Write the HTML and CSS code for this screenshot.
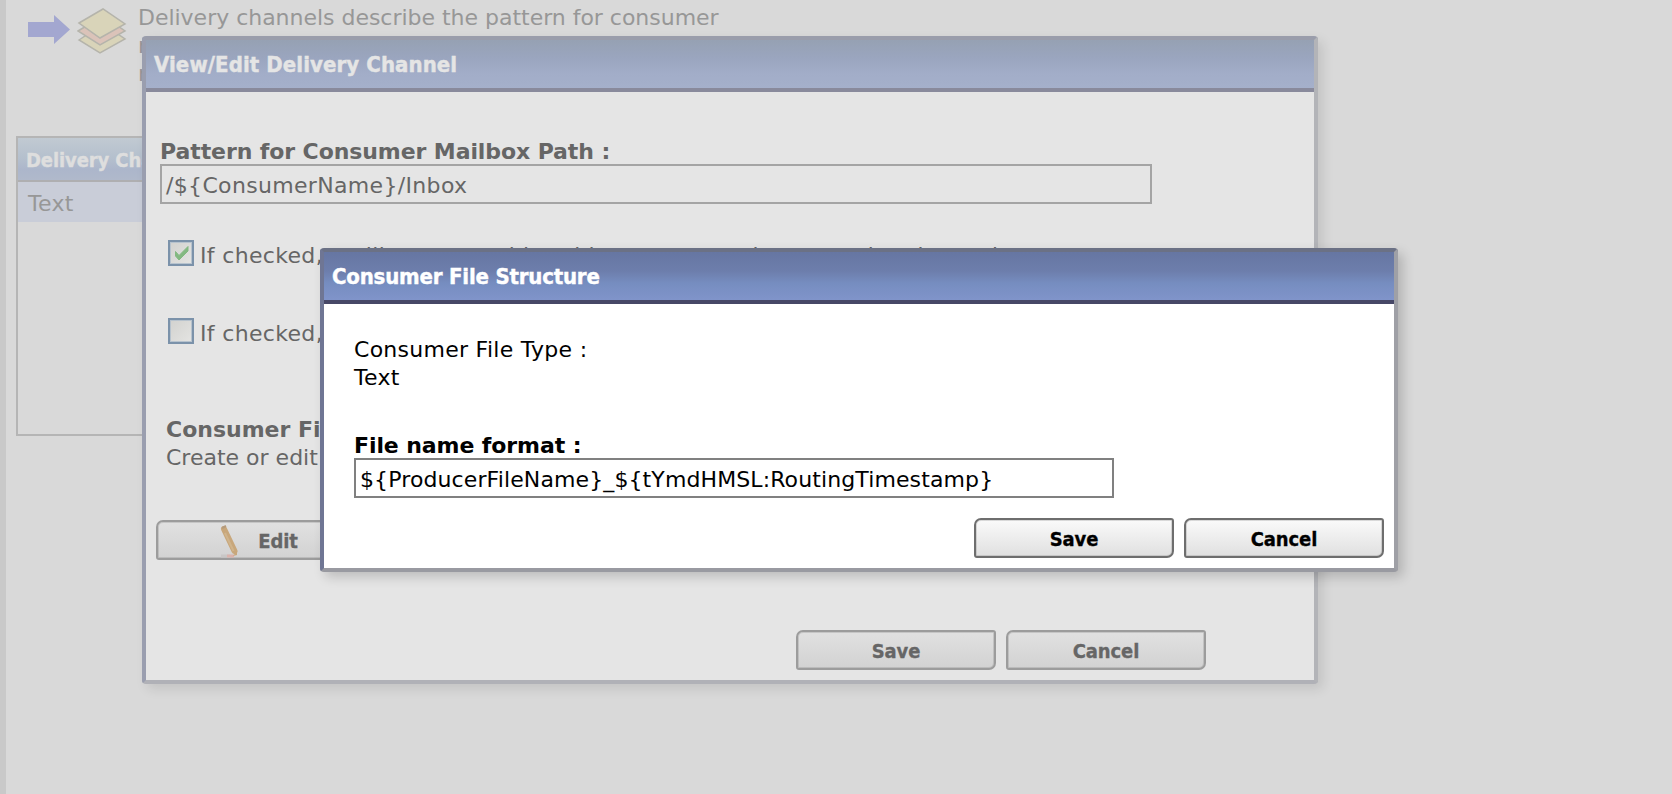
FILE: index.html
```html
<!DOCTYPE html>
<html lang="en">
<head>
<meta charset="utf-8">
<title>Consumer File Structure</title>
<link rel="stylesheet" href="styles.css">
</head>
<body>
<main class="page">
  <header class="intro">
    <svg class="arrow" width="44" height="32" viewBox="0 0 44 32"><path d="M1 8H27V1L43 15.500L27 30V23H1Z" fill="#a3a7d0"/></svg>
    <svg class="stack" width="50" height="48" viewBox="0 0 50 48" stroke="#b5b4ab" stroke-width="1.500"><path d="M2 33L26 17L48 32L23 46Z" fill="#d9d4b9"/><path d="M1 24L26 9L48 24L23 38Z" fill="#dbc3b9"/><path d="M2 16L26 2L48 17L23 31Z" fill="#d9d4b9"/></svg>
    <p class="intro-text">Delivery channels describe the pattern for consumer<br>mailboxes<br>mailbox</p>
  </header>
  <section class="list">
    <h2 class="list-head">Delivery Channels</h2>
    <div class="list-row">Text</div>
  </section>
</main>

<section class="dialog channel">
  <h1 class="title">View/Edit Delivery Channel</h1>
  <div class="channel-body">
    <div class="label">Pattern for Consumer Mailbox Path :</div>
    <div class="field path">/${ConsumerName}/Inbox</div>
    <div class="check first"><svg class="box" width="26" height="26" viewBox="2 2 22 22"><path d="M7.500 11.500L11 15.500L20 6.500V11L11 20L7.500 16Z" fill="#83b981" stroke="#83b981"/></svg><span>If checked, mailboxes matching this pattern can be created and saved</span></div>
    <div class="check second"><span class="box"></span><span>If checked, mailboxes</span></div>
    <div class="structure"><b>Consumer File Structure</b><br>Create or edit the structure</div>
    <button class="btn edit"><svg width="22" height="36" viewBox="0 0 22 36"><path d="M2 33H11" stroke="#c9c7c6" stroke-width="3"/><path d="M8 33H15" stroke="#dbb3ac" stroke-width="3"/><path d="M5 6L15.500 28" stroke="#c8a77b" stroke-width="6" stroke-linecap="round"/><path d="M14 33L18 32V28Z" fill="#c8a77b"/><path d="M6 10L14.500 28" stroke="#d0b48c" stroke-width="2"/><path d="M3 5L7 3" stroke="#b59b7c" stroke-width="2"/></svg><span>Edit</span></button>
    <div class="actions"><button class="btn">Save</button><button class="btn">Cancel</button></div>
  </div>
</section>

<section class="dialog file">
  <h1 class="title">Consumer File Structure</h1>
  <div class="file-body">
    <div class="type">Consumer File Type :<br>Text</div>
    <div class="label">File name format :</div>
    <div class="field format">${ProducerFileName}_${tYmdHMSL:RoutingTimestamp}</div>
  </div>
  <div class="actions"><button class="btn">Save</button><button class="btn">Cancel</button></div>
</section>
</body>
</html>
```
FILE: styles.css
```css
* { box-sizing: border-box; }
body {
  margin: 0;
  width: 1672px;
  height: 794px;
  overflow: hidden;
  background: #d9d9d9;
  font: 22px/28px "DejaVu Sans", sans-serif;
  color: #000;
}
h1, h2, p { margin: 0; }
svg { display: block; flex: none; }
.page {
  height: 794px;
  padding: 3px 0 0 10px;
  border-left: 6px solid #c9c9c9;
  color: #979797;
}
.intro { display: flex; height: 133px; padding-left: 11px; white-space: nowrap; }
.arrow { margin-top: 11px; }
.stack { margin: 4px 0 0 6px; }
.intro-text { margin: 1px 0 0 11px; letter-spacing: -.02px; }
.list { width: 400px; height: 300px; border: 2px solid #b5b5b5; }
.list-head {
  height: 44px;
  padding: 8px 8px;
  border-bottom: 2px solid #afafb1;
  background: linear-gradient(#c1cad2, #b4bfcd 50%, #acb6cb 75%, #b0b9cb);
  color: #dedede;
  font: bold 20px/28px "DejaVu Sans Condensed", sans-serif;
  letter-spacing: -.1px;
  -webkit-text-stroke: .4px currentColor;
}
.list-row { height: 40px; padding: 8px 10px; background: #c9cdd8; letter-spacing: .3px; line-height: 28px; }
.dialog {
  position: absolute;
  border: 4px solid;
  border-radius: 4px;
  white-space: nowrap;
}
.channel {
  left: 142px;
  top: 36px;
  width: 1176px;
  height: 648px;
  border-color: #9a9dab #b3b4b8 #b0b1b7 #9a9eaf;
  background: #e5e5e5;
  color: #666;
  box-shadow: 5px 5px 12px rgba(0, 0, 0, .1);
}
.file {
  left: 320px;
  top: 248px;
  width: 1078px;
  height: 324px;
  border-color: #6b7185 #9fa0a6 #999aa1 #6f7694;
  background: #fff;
  box-shadow: 5px 5px 12px rgba(0, 0, 0, .18);
}
.title {
  height: 52px;
  padding: 11px 8px;
  font: bold 22px/28px "DejaVu Sans Condensed", sans-serif;
  letter-spacing: .08px;
  -webkit-text-stroke: .4px currentColor;
}
.channel .title {
  border-bottom: 4px solid #898a9c;
  background: linear-gradient(#96a1b3, #9aa5be 35%, #a2adc8 70%, #a5b0cb);
  color: #e5e5e5;
}
.file .title {
  border-bottom: 4px solid #474867;
  background: linear-gradient(#6676a2, #6d7eac 40%, #768dc0 65%, #8094ca);
  color: #fff;
  letter-spacing: -.2px;
}
.channel-body { padding: 44px 0 0 14px; }
.label { height: 28px; font-weight: bold; line-height: 32px; letter-spacing: -.09px; }
.field { height: 40px; border: 2px solid #a4a4a4; padding: 6px 4px; line-height: 28px; letter-spacing: .11px; }
.path { width: 992px; letter-spacing: .33px; }
.check { display: flex; gap: 6px; padding-left: 8px; line-height: 32px; letter-spacing: .33px; }
.box {
  width: 26px;
  height: 26px;
  border: 2px solid #7b92aa;
  background: linear-gradient(135deg, #d2d2cf, #e4e4e2);
  box-shadow: inset 0 0 0 1px #b7c3ce;
}
.first { margin-top: 36px; height: 78px; }
.second { height: 98px; }
.structure { height: 104px; padding-left: 6px; }
.btn {
  display: flex;
  align-items: center;
  justify-content: center;
  width: 200px;
  height: 40px;
  padding: 1px 0 0;
  border: 2px solid #6e6e6e;
  border-radius: 7px 3px 7px 3px;
  background: linear-gradient(#fafafa, #e0e0e0);
  box-shadow: inset 0 0 0 1px rgba(120, 120, 120, .25);
  font: bold 20px/28px "DejaVu Sans Condensed", sans-serif;
  letter-spacing: -.1px;
  -webkit-text-stroke: .3px currentColor;
  color: #000;
}
.channel .btn {
  border-color: #9c9c9c;
  background: linear-gradient(#e1e1e1, #d2d2d2);
  color: #666;
}
.channel .edit { margin-left: -4px; padding-left: 5px; gap: 17px; }
.actions { display: flex; gap: 10px; }
.channel .actions { margin: 70px 0 0 636px; }
.file-body { padding: 32px 0 0 30px; height: 214px; }
.type { height: 94px; letter-spacing: .27px; }
.format { width: 760px; border-color: #808080; }
.file .actions { margin-left: 650px; }
```
